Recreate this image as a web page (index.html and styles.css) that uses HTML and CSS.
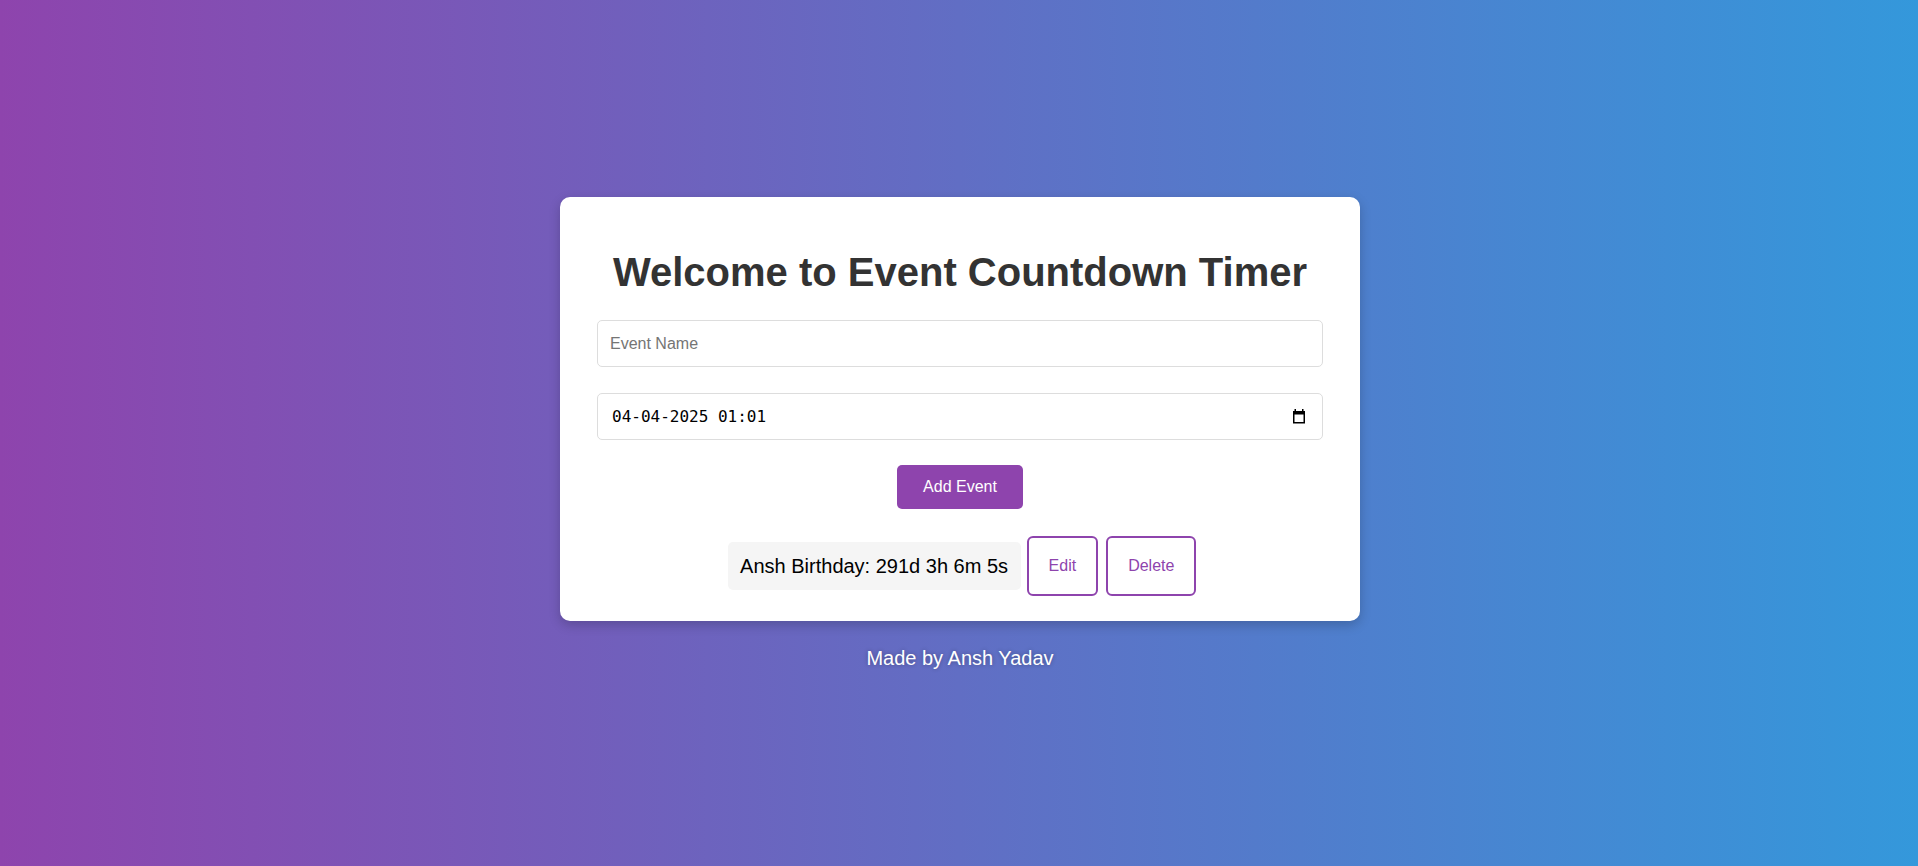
FILE: index.html
```html
<!DOCTYPE html>
<html lang="en">
<head>
<meta charset="utf-8">
<title>Event Countdown Timer</title>
<link rel="stylesheet" href="styles.css">
</head>
<body>
<main class="page">
  <section class="card">
    <h1 class="title">Welcome to Event Countdown Timer</h1>
    <input class="field name-field" type="text" placeholder="Event Name">
    <div class="field date-field">
      <input class="date-text" type="text" value="04-04-2025 01:01" aria-label="Event date and time">
      <svg class="cal-icon" width="14" height="16" viewBox="0 0 14 16" aria-hidden="true">
        <rect x="1.75" y="3.75" width="10.5" height="11" fill="none" stroke="#000" stroke-width="1.5"/>
        <rect x="1" y="3" width="12" height="3.5" fill="#000"/>
        <rect x="2.5" y="1" width="1.5" height="3" fill="#000"/>
        <rect x="10" y="1" width="1.5" height="3" fill="#000"/>
      </svg>
    </div>
    <button class="add-btn" type="button">Add Event</button>
    <ul class="events">
      <li class="event">
        <span class="event-timer">Ansh Birthday: 291d 3h 6m 5s</span>
        <button class="btn-outline" type="button">Edit</button>
        <button class="btn-outline" type="button">Delete</button>
      </li>
    </ul>
  </section>
  <p class="credit">Made by Ansh Yadav</p>
</main>
</body>
</html>
```
FILE: styles.css
```css
html, body {
  margin: 0;
  height: 100%;
}

body {
  font-family: "Liberation Sans", Arial, sans-serif;
  background: linear-gradient(to right, #8e44ad, #3498db);
}

.page {
  min-height: 100vh;
  box-sizing: border-box;
  padding-left: 2px;
  display: flex;
  flex-direction: column;
  align-items: center;
  justify-content: center;
}

.card {
  width: 800px;
  box-sizing: border-box;
  background: #fff;
  border-radius: 10px;
  padding: 52px 37px 25.5px;
  box-shadow: 0 4px 12px rgba(0, 0, 0, 0.2);
  display: flex;
  flex-direction: column;
  align-items: center;
}

.title {
  margin: 0 0 25.5px;
  font-size: 40px;
  line-height: 46px;
  font-weight: bold;
  color: #333;
}

.field {
  width: 100%;
  box-sizing: border-box;
  height: 47px;
  margin: 0 0 25.5px;
  border: 1px solid #ddd;
  border-radius: 5px;
  background: #fff;
  font-family: "Liberation Sans", Arial, sans-serif;
  font-size: 16px;
  padding: 0 12px;
  color: #000;
}

.name-field::placeholder {
  color: #757575;
}

.date-field {
  display: flex;
  align-items: center;
  padding: 0 16px 0 14px;
}

.date-text {
  flex: 1;
  border: 0;
  outline: 0;
  padding: 0;
  margin: 0;
  background: transparent;
  font-family: "DejaVu Sans Mono", monospace;
  font-size: 16px;
  color: #000;
}

.cal-icon {
  flex: none;
  display: block;
}

.add-btn {
  background: #8e44ad;
  color: #fff;
  border: 0;
  border-radius: 5px;
  padding: 13px 26px;
  font-family: "Liberation Sans", Arial, sans-serif;
  font-size: 16px;
  line-height: 18px;
  margin: 0 0 26.5px;
  cursor: pointer;
}

.events {
  list-style: none;
  margin: 0;
  padding: 0 0 0 4px;
}

.event {
  display: flex;
  align-items: center;
}

.event-timer {
  background: #f5f5f5;
  border-radius: 5px;
  padding: 12px 12.5px;
  font-size: 20px;
  line-height: 24px;
  color: #000;
  margin-right: 6px;
}

.btn-outline {
  background: #fff;
  border: 2px solid #8e44ad;
  color: #8e44ad;
  border-radius: 6px;
  padding: 19px 20px;
  font-family: "Liberation Sans", Arial, sans-serif;
  font-size: 16px;
  line-height: 18px;
  cursor: pointer;
}

.btn-outline + .btn-outline {
  margin-left: 8px;
}

.credit {
  margin: 24.5px 0 0;
  color: #fff;
  font-size: 20px;
  line-height: 24px;
  text-shadow: 0 0 4px rgba(0, 0, 0, 0.3);
}
```
